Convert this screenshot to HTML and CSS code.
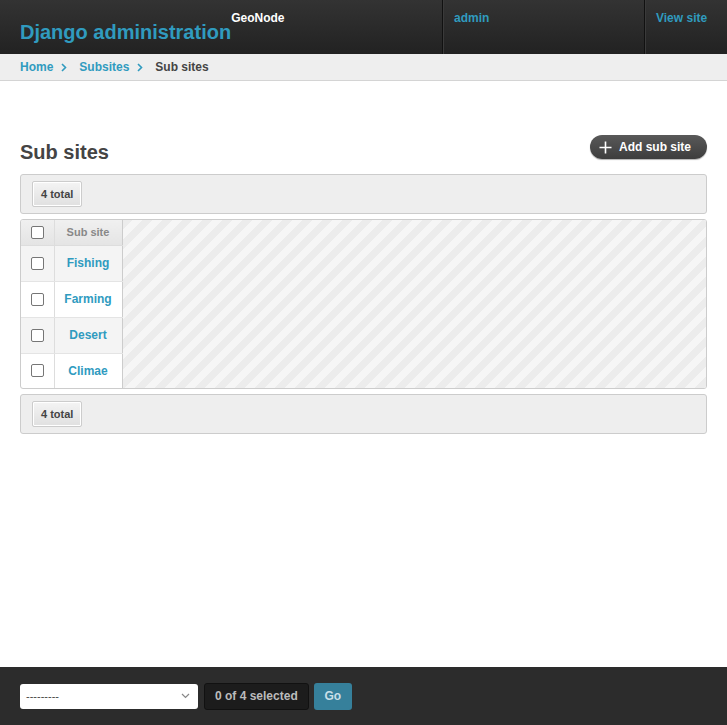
FILE: index.html
```html
<!DOCTYPE html>
<html>
<head>
<meta charset="utf-8">
<link rel="stylesheet" href="styles.css">
</head>
<body>
<header class="header">
  <div class="branding">
    <h1 class="brand-title">Django administration</h1>
    <span class="brand-sub">GeoNode</span>
  </div>
  <div class="user-tools">
    <a class="tool user" href="#">admin</a>
    <a class="tool view" href="#">View site</a>
  </div>
</header>
<nav class="breadcrumbs">
  <a href="#">Home</a><svg class="sep" width="6" height="9" viewBox="0 0 6 9"><path d="M1 1l3.5 3.5L1 8" fill="none" stroke="#309bbf" stroke-width="1.6"/></svg><a href="#">Subsites</a><svg class="sep" width="6" height="9" viewBox="0 0 6 9"><path d="M1 1l3.5 3.5L1 8" fill="none" stroke="#309bbf" stroke-width="1.6"/></svg><span class="current">Sub sites</span>
</nav>
<main class="content">
  <div class="title-row">
    <h2 class="title">Sub sites</h2>
    <a class="add-btn" href="#"><svg width="13" height="13" viewBox="0 0 13 13"><path d="M6.5 0.5v12M0.5 6.5h12" stroke="#fff" stroke-width="1.6"/></svg>Add sub site</a>
  </div>
  <div class="toolbar"><span class="total">4 total</span></div>
  <div class="results">
    <table class="result-table">
      <thead>
        <tr><th class="chk"><span class="cb"></span></th><th class="name">Sub site</th></tr>
      </thead>
      <tbody>
        <tr class="odd"><td class="chk"><span class="cb"></span></td><td class="name"><a href="#">Fishing</a></td></tr>
        <tr><td class="chk"><span class="cb"></span></td><td class="name"><a href="#">Farming</a></td></tr>
        <tr class="odd"><td class="chk"><span class="cb"></span></td><td class="name"><a href="#">Desert</a></td></tr>
        <tr><td class="chk"><span class="cb"></span></td><td class="name"><a href="#">Climae</a></td></tr>
      </tbody>
    </table>
    <div class="stripes"></div>
  </div>
  <div class="toolbar bottom"><span class="total">4 total</span></div>
</main>
<footer class="footer">
  <div class="select"><span>---------</span><svg width="9" height="6" viewBox="0 0 9 6"><path d="M1 1l3.5 3.5L8 1" fill="none" stroke="#888" stroke-width="1.2"/></svg></div>
  <span class="counter">0 of 4 selected</span>
  <span class="go">Go</span>
</footer>
</body>
</html>
```
FILE: styles.css
```css
* { box-sizing: border-box; }
html, body { margin: 0; padding: 0; height: 100%; }
body {
  font-family: "Liberation Sans", Arial, sans-serif;
  font-size: 12px;
  color: #444;
  background: #fff;
  display: flex;
  flex-direction: column;
  min-height: 725px;
}
a { color: #309bbf; text-decoration: none; }

.header {
  height: 54px;
  background: linear-gradient(#333, #222);
  display: flex;
  justify-content: space-between;
}
.branding { display: flex; align-items: flex-start; padding-left: 20px; }
.brand-title {
  margin: 20px 0 0;
  font-size: 20px;
  font-weight: bold;
  color: #309bbf;
  line-height: 24px;
  letter-spacing: 0;
}
.brand-sub {
  color: #fff;
  font-weight: bold;
  font-size: 12px;
  margin-top: 11px;
  line-height: 14px;
}
.user-tools { display: flex; }
.tool {
  display: block;
  border-left: 1px solid #111;
  box-shadow: inset 1px 0 0 #3a3a3a;
  padding: 11px 11px 0 11px;
  font-weight: bold;
  line-height: 14px;
}
.tool.user { width: 202px; }
.tool.view { width: 83px; }

.breadcrumbs {
  height: 27px;
  background: #eee;
  border-bottom: 1px solid #d4d4d4;
  padding: 0 20px;
  display: flex;
  align-items: center;
  font-weight: bold;
  line-height: 14px;
}
.breadcrumbs .sep { display: block; margin: 0 12px 0 8px; }
.breadcrumbs .current { color: #444; }

.content { flex: 1; padding: 54px 20px 0; }
.title-row { display: flex; justify-content: space-between; align-items: flex-start; }
.title {
  margin: 5px 0 0;
  font-size: 20px;
  line-height: 24px;
  font-weight: bold;
  color: #444;
}
.add-btn {
  display: flex;
  align-items: center;
  gap: 7px;
  height: 24px;
  padding: 0 16px 0 9px;
  border-radius: 12px;
  background: linear-gradient(#595959, #3d3d3d);
  color: #fff;
  font-weight: bold;
  font-size: 12px;
  box-shadow: 0 1px 1px rgba(0,0,0,0.3);
}
.add-btn svg { display: block; }

.toolbar {
  margin-top: 10px;
  height: 40px;
  background: #eee;
  border: 1px solid #ccc;
  border-radius: 3px;
  padding: 6px 11px;
}
.toolbar.bottom { margin-top: 5px; }
.total {
  display: inline-block;
  height: 26px;
  line-height: 24px;
  padding: 0 8px;
  border: 1px solid #ccc;
  border-radius: 2px;
  background: linear-gradient(#f4f4f4, #e0e0e0);
  font-weight: bold;
  font-size: 11px;
  color: #444;
  box-shadow: 0 0 0 1px #fff inset;
}
.results {
  margin-top: 5px;
  display: flex;
  border: 1px solid #ccc;
  border-radius: 3px;
  overflow: hidden;
}
.result-table { border-collapse: collapse; }
.result-table th, .result-table td { padding: 0; }
.result-table th {
  height: 25px;
  background: linear-gradient(#f0f0f0, #e4e4e4);
  border-bottom: 1px solid #ddd;
  color: #888;
  font-size: 11px;
  font-weight: bold;
}
.result-table td {
  height: 36px;
  border-bottom: 1px solid #e4e4e4;
  font-weight: bold;
  font-size: 12px;
}
.result-table tbody tr:last-child td { border-bottom: none; height: 35px; }
.result-table tr.odd td { background: #f4f4f4; }
.result-table .chk { width: 33px; border-right: 1px solid #ddd; }
.result-table .name { width: 68px; border-right: 1px solid #ccc; text-align: center; }
.cb {
  display: block;
  width: 13px;
  height: 13px;
  margin: 0 auto;
  border: 1px solid #767676;
  border-radius: 2px;
  background: #fff;
}
.stripes {
  flex: 1;
  background-color: #f6f6f6;
  background-image: linear-gradient(135deg, #ececec 25%, transparent 25%, transparent 50%, #ececec 50%, #ececec 75%, transparent 75%, transparent);
  background-size: 20px 20px;
}

.footer {
  height: 58px;
  background: #2c2c2c;
  display: flex;
  align-items: center;
  padding: 0 20px;
  gap: 6px;
}
.select {
  width: 178px;
  height: 25px;
  background: #fff;
  border-radius: 3px;
  display: flex;
  align-items: center;
  justify-content: space-between;
  padding: 0 8px 0 6px;
  color: #444;
  font-size: 11px;
}
.counter {
  height: 27px;
  line-height: 25px;
  padding: 0 10px;
  background: #1c1c1c;
  border: 1px solid #111;
  border-radius: 3px;
  color: #bbb;
  font-weight: bold;
  font-size: 12px;
}
.go {
  margin-left: -1px;
  height: 27px;
  width: 38px;
  line-height: 27px;
  text-align: center;
  background: #36809b;
  border-radius: 3px;
  color: #c9dfe8;
  font-weight: bold;
  font-size: 12px;
}
```
